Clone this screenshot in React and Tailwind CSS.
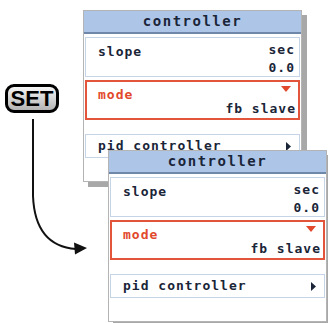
const mono = { fontFamily: '"DejaVu Sans Mono", "Liberation Mono", monospace' };

const Panel = ({ className }) => (
  <div
    className={`absolute w-[219px] h-[172px] bg-white border border-[#b4b4b4] shadow-[5px_5px_0_#a8a8a8] flex flex-col ${className}`}
    style={mono}
  >
    {/* Header */}
    <div className="h-[23px] shrink-0 bg-[#adc6e8] border-b-2 border-[#6f88aa] flex items-center justify-center text-[14px] font-bold tracking-[1.5px] text-[#1a2538]">
      controller
    </div>

    <div className="flex flex-col px-[1px] pt-[3px] text-[13px] font-bold tracking-[1px] text-[#1a2538]">
      {/* slope */}
      <div className="h-[40px] border border-[#c6d4e8] pl-[12px] pr-[4px] pt-[6px] leading-[16px]">
        <div className="flex justify-between">
          <span>slope</span>
          <span className="-mt-[2px]">sec</span>
        </div>
        <div className="text-right">0.0</div>
      </div>

      {/* mode */}
      <div className="mt-[3px] h-[40px] border-2 border-[#e2553a] pl-[11px] pr-[2px] pt-[6px] leading-[14px]">
        <div className="flex justify-between items-start">
          <span className="text-[#e2482c]">mode</span>
          <svg width="10" height="6" viewBox="0 0 10 6" className="mt-[-2px] mr-[5px]">
            <polygon points="0,0 10,0 5,6" fill="#e2482c" />
          </svg>
        </div>
        <div className="text-right">fb slave</div>
      </div>

      {/* pid controller */}
      <div className="mt-[14px] h-[24px] border border-[#c6d4e8] pl-[12px] pr-[8px] flex items-center justify-between">
        <span>pid controller</span>
        <svg width="5" height="9" viewBox="0 0 5 9">
          <polygon points="0,0 5,4.5 0,9" fill="#1a2538" />
        </svg>
      </div>
    </div>
  </div>
);

export default function App() {
  return (
    <div className="relative w-[328px] h-[323px] bg-white overflow-hidden">
      {/* SET key */}
      <div
        className="absolute left-[5px] top-[84px] w-[54px] h-[29px] rounded-[9px] border-[3px] border-black bg-linear-to-b from-[#f6f6f6] to-[#b4b4b4] flex items-center justify-center text-[22px] font-bold leading-none text-black"
        style={{ fontFamily: '"Liberation Sans", Arial, sans-serif' }}
      >
        SET
      </div>

      {/* curved arrow */}
      <svg className="absolute left-0 top-0" width="100" height="323" viewBox="0 0 100 323">
        <path d="M33 119 L33 196 Q35 246 76 249" fill="none" stroke="#111" strokeWidth="2" />
        <polygon points="87,248 74,242.5 75,254.5" fill="#111" />
      </svg>

      <Panel className="left-[83px] top-[10px]" />
      <Panel className="left-[108px] top-[150px]" />
    </div>
  );
}
